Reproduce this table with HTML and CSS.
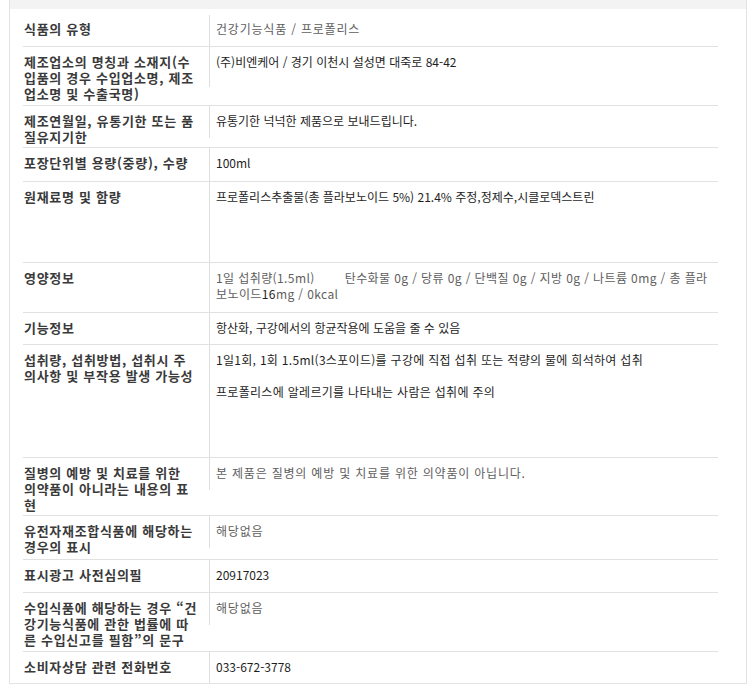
FILE: index.html
```html
<!DOCTYPE html>
<html lang="ko">
<head>
<meta charset="utf-8">
<title>상품정보제공고시</title>
<link rel="stylesheet" href="styles.css">
</head>
<body>
<div class="sheet">
  <div class="band"></div>
  <div class="info">
    <div class="row r1">
      <div class="lbl">식품의 유형</div>
      <div class="val cut1 soft">건강기능식품 / 프로폴리스</div>
    </div>
    <div class="row r2">
      <div class="lbl">제조업소의 명칭과 소재지(수<br>입품의 경우 수입업소명, 제조<br>업소명 및 수출국명)</div>
      <div class="val cut40">(주)비엔케어 / 경기 이천시 설성면 대죽로 84-42</div>
    </div>
    <div class="row r3">
      <div class="lbl">제조연월일, 유통기한 또는 품<br>질유지기한</div>
      <div class="val cut32">유통기한 넉넉한 제품으로 보내드립니다.</div>
    </div>
    <div class="row r4">
      <div class="lbl">포장단위별 용량(중량), 수량</div>
      <div class="val">100ml</div>
    </div>
    <div class="row r5">
      <div class="lbl">원재료명 및 함량</div>
      <div class="val">프로폴리스추출물(총 플라보노이드 5%) 21.4% 주정,정제수,시클로덱스트린</div>
    </div>
    <div class="row r6">
      <div class="lbl">영양정보</div>
      <div class="val soft nutri">1일 섭취량(1.5ml)<span class="gap"></span>탄수화물 0g / 당류 0g / 단백질 0g / 지방 0g / 나트륨 0mg / 총 플라<br>보노이드<span class="dark">16</span>mg / 0kcal</div>
    </div>
    <div class="row r7">
      <div class="lbl">기능정보</div>
      <div class="val">항산화, 구강에서의 항균작용에 도움을 줄 수 있음</div>
    </div>
    <div class="row r8">
      <div class="lbl">섭취량, 섭취방법, 섭취시 주<br>의사항 및 부작용 발생 가능성</div>
      <div class="val intake">
        <p class="para">1일1회, 1회 1.5ml(3스포이드)를 구강에 직접 섭취 또는 적량의 물에 희석하여 섭취</p>
        <p class="para">프로폴리스에 알레르기를 나타내는 사람은 섭취에 주의</p>
      </div>
    </div>
    <div class="row r9">
      <div class="lbl">질병의 예방 및 치료를 위한<br>의약품이 아니라는 내용의 표<br>현</div>
      <div class="val cut32 soft">본 제품은 질병의 예방 및 치료를 위한 의약품이 아닙니다.</div>
    </div>
    <div class="row r10">
      <div class="lbl">유전자재조합식품에 해당하는<br>경우의 표시</div>
      <div class="val cut32 soft">해당없음</div>
    </div>
    <div class="row r11">
      <div class="lbl">표시광고 사전심의필</div>
      <div class="val">20917023</div>
    </div>
    <div class="row r12">
      <div class="lbl">수입식품에 해당하는 경우 “건<br>강기능식품에 관한 법률에 따<br>른 수입신고를 필함”의 문구</div>
      <div class="val cut32 soft">해당없음</div>
    </div>
    <div class="row r13">
      <div class="lbl">소비자상담 관련 전화번호</div>
      <div class="val">033-672-3778</div>
    </div>
  </div>
</div>
</body>
</html>
```

FILE: styles.css
```css
* {
  box-sizing: border-box;
}

html,
body {
  margin: 0;
  padding: 0;
  background: #ffffff;
}

body {
  font-family: "Noto Sans CJK KR", "Noto Sans", sans-serif;
  font-size: 12px;
  color: #222222;
}

.sheet {
  margin-left: 9px;
  width: 738px;
  border: 1px solid #e3e3e3;
  border-top: 0;
  background: #ffffff;
}

.band {
  height: 9px;
  background: #f3f3f3;
}

.info {
  margin-left: 13px;
  width: 695px;
}

.row {
  display: grid;
  grid-template-columns: 186px 1fr;
  border-bottom: 1px solid #e1e1e1;
}

.row.r13 {
  border-bottom: 0;
}

.lbl {
  padding: 7px 0 0 1px;
  font-size: 13px;
  line-height: 16px;
  font-weight: 700;
  letter-spacing: 0.7px;
  color: #3a3a3a;
  white-space: nowrap;
}

.val {
  padding: 7px 0 0 7px;
  line-height: 16px;
  color: #1e1e1e;
  white-space: nowrap;
  background-image: linear-gradient(#dedede, #dedede);
  background-repeat: no-repeat;
  background-position: 0 0;
  background-size: 1px 100%;
}

.val.cut1 {
  background-position: 0 6px;
  background-size: 1px 31px;
}

.val.cut40 {
  background-size: 1px 40px;
}

.val.cut32 {
  background-size: 1px 32px;
}

.soft {
  color: #5e5e5e;
  letter-spacing: 0.8px;
}

.soft.nutri {
  letter-spacing: 0.4px;
}

.intake {
  letter-spacing: 0.3px;
}

.dark {
  color: #1e1e1e;
}

.gap {
  display: inline-block;
  width: 30px;
}

.para {
  margin: 0 0 16px 0;
}

.r1 { height: 38px; }
.r1 .lbl,
.r1 .val { padding-top: 12px; }
.r2 { height: 59px; }
.r3 { height: 42px; }
.r4 { height: 34px; }
.r5 { height: 81px; }
.r6 { height: 50px; }
.r7 { height: 32px; }
.r8 { height: 113px; }
.r9 { height: 58px; }
.r10 { height: 44px; }
.r11 { height: 33px; }
.r12 { height: 59px; }
.r13 { height: 31px; }
```
